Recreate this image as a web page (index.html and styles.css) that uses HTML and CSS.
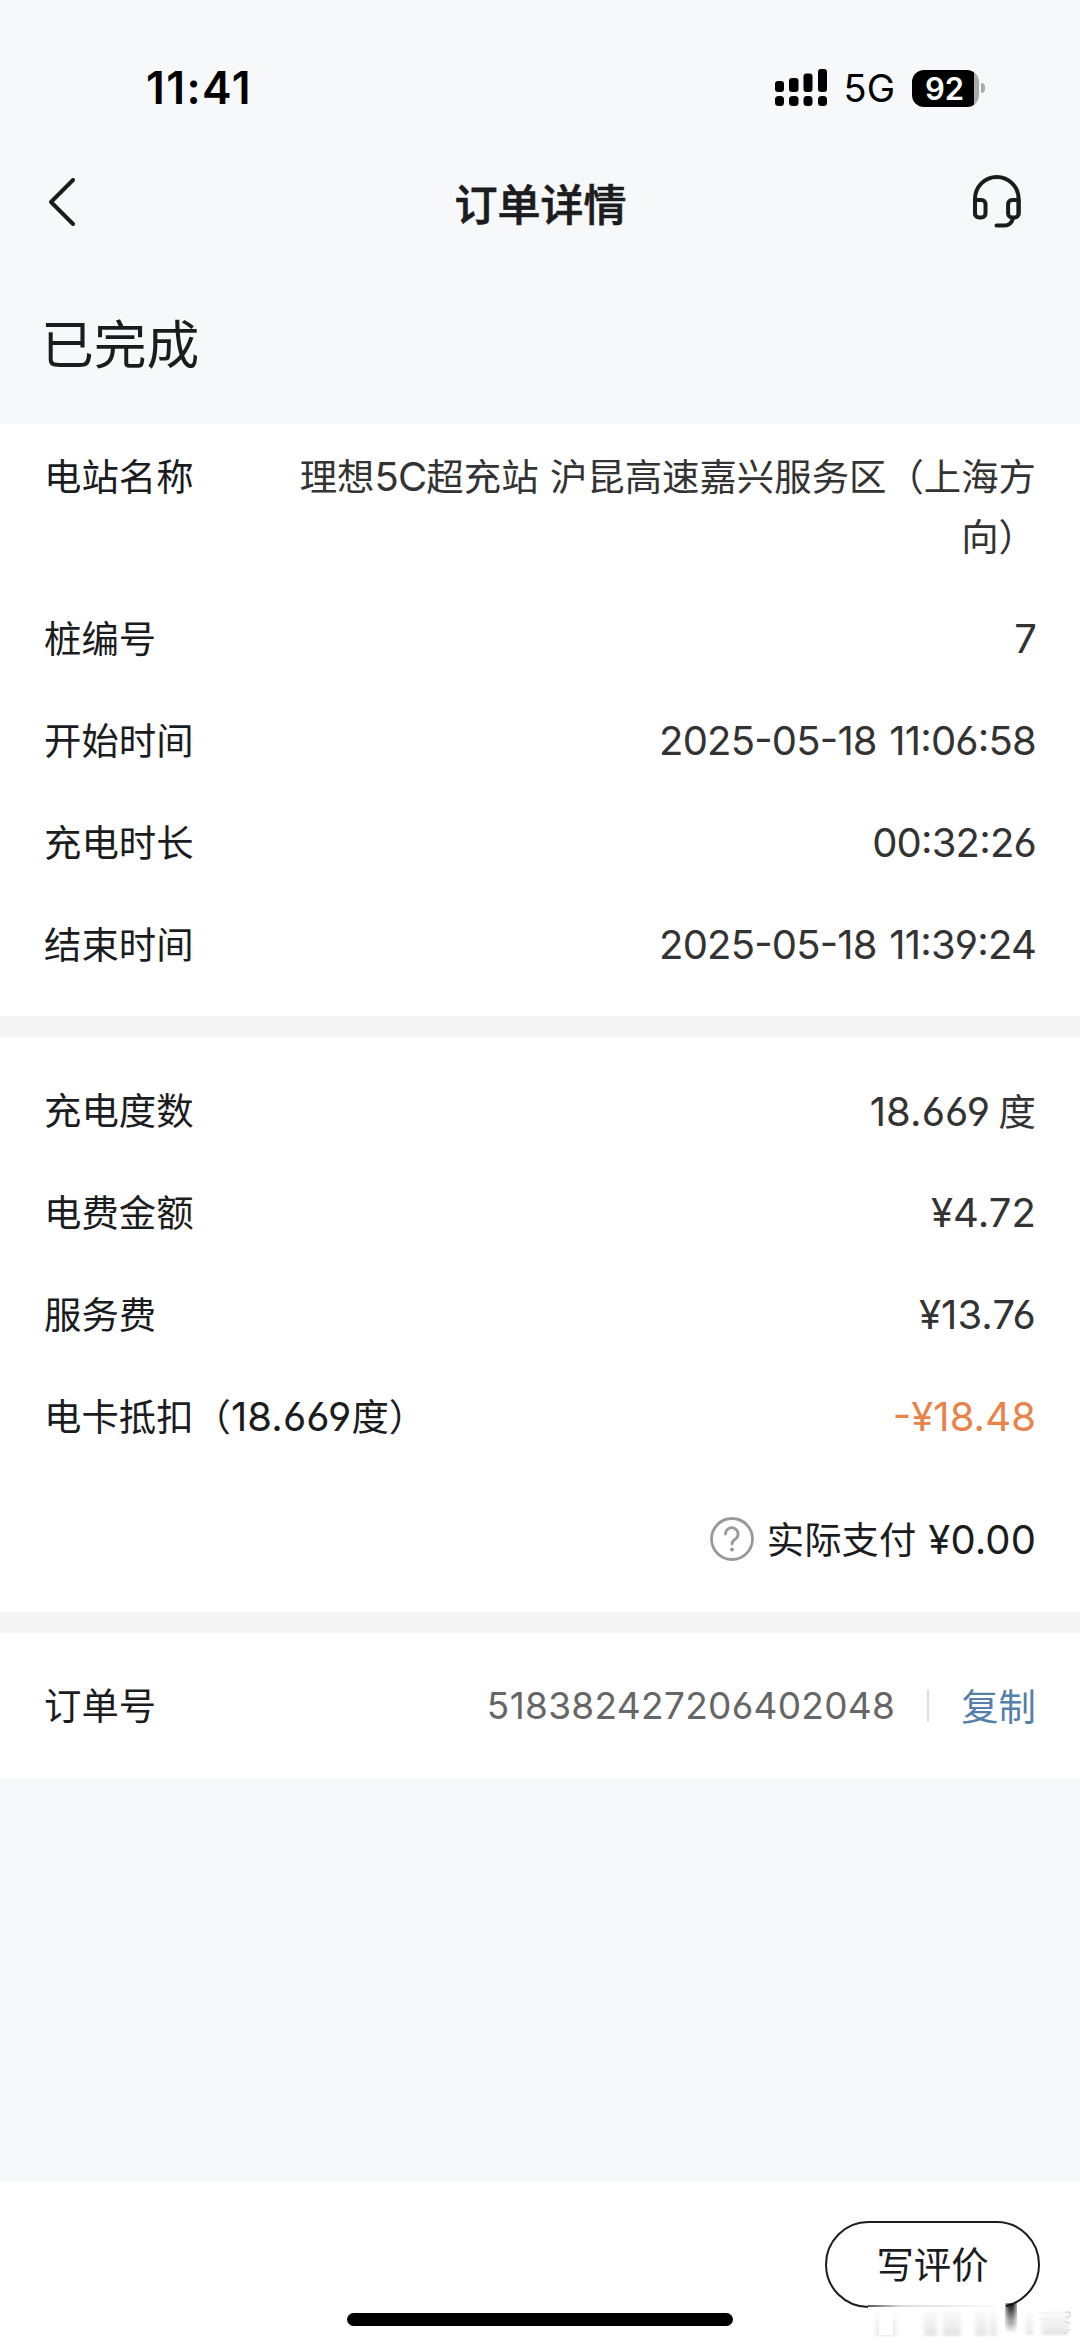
FILE: index.html
```html
<!DOCTYPE html>
<html lang="zh-CN">
<head>
  <meta charset="UTF-8" />
  <meta name="viewport" content="width=device-width, initial-scale=1.0"/>
  <title>订单详情</title>
  <link rel="stylesheet" href="styles.css">
</head>
<body>
  <div class="page">
    <div class="status-bar">
      <span class="time">11:41</span>
      <div class="status-right">
        <svg class="signal" width="52" height="38" viewBox="0 0 52 38">
          <rect x="0" y="12" width="9" height="11" rx="3"/>
          <rect x="14" y="9" width="9.500" height="14" rx="3"/>
          <rect x="28.500" y="4.500" width="9" height="18.500" rx="3"/>
          <rect x="43" y="0" width="9" height="23" rx="3"/>
          <rect x="0" y="27" width="9" height="10" rx="3.500"/>
          <rect x="14" y="27" width="9.500" height="10" rx="3.500"/>
          <rect x="28.500" y="27" width="9" height="10" rx="3.500"/>
          <rect x="43" y="27" width="9" height="10" rx="3.500"/>
        </svg>
        <span class="network">5G</span>
        <div class="battery"><span>92</span></div>
        <i class="battery-tip"></i>
      </div>
    </div>

    <header class="nav">
      <svg class="back" width="26" height="48" viewBox="0 0 26 48">
        <path d="M24 2 L2 24 L24 46"/>
      </svg>
      <h1>订单详情</h1>
      <svg class="service" width="50" height="56" viewBox="0 0 50 56">
        <path d="M3 40V25a21.800 22 0 0 1 43.600 0v15"/>
        <path d="M3 26h6.500a4 4 0 0 1 4 4v9.500a4 4 0 0 1-4 4h-2.500a4 4 0 0 1-4-4z"/>
        <path d="M46.600 26h-6.500a4 4 0 0 0-4 4v9.500a4 4 0 0 0 4 4h2.500a4 4 0 0 0 4-4z"/>
        <path d="M41 44.500c-1.500 5-4 7-8.500 7h-8"/>
      </svg>
    </header>

    <h2 class="state">已完成</h2>

    <section class="info">
      <div class="row station">
        <span class="label">电站名称</span>
        <span class="value">理想<span class="num">5C</span>超充站 沪昆高速嘉兴服务区（上海方向）</span>
      </div>
      <div class="row"><span class="label">桩编号</span><span class="value num">7</span></div>
      <div class="row"><span class="label">开始时间</span><span class="value num">2025-05-18 11:06:58</span></div>
      <div class="row"><span class="label">充电时长</span><span class="value num">00:32:26</span></div>
      <div class="row"><span class="label">结束时间</span><span class="value num">2025-05-18 11:39:24</span></div>
    </section>

    <section class="fees">
      <div class="row"><span class="label">充电度数</span><span class="value"><span class="num">18.669</span> 度</span></div>
      <div class="row"><span class="label">电费金额</span><span class="value num">¥4.72</span></div>
      <div class="row"><span class="label">服务费</span><span class="value num">¥13.76</span></div>
      <div class="row"><span class="label">电卡抵扣（<span class="num">18.669</span>度）</span><span class="value num discount">-¥18.48</span></div>
      <div class="total">
        <svg class="help" width="44" height="44" viewBox="0 0 44 44">
          <circle cx="22" cy="22" r="20.500"/>
          <path d="M15.500 17a6.300 6.300 0 1 1 9.800 5.200c-2.300 1.500-3.300 2.300-3.300 4.800"/>
          <circle class="dot" cx="22" cy="32.500" r="2"/>
        </svg>
        <span class="label">实际支付</span>
        <span class="num">¥0.00</span>
      </div>
    </section>

    <section class="order">
      <span class="label">订单号</span>
      <span class="order-no num">518382427206402048</span>
      <i class="line"></i>
      <a class="copy">复制</a>
    </section>

    <footer class="footer">
      <button class="review">写评价</button>
      <!-- faded mark over the corner of the button -->
      <svg class="mark" width="206" height="36" viewBox="0 0 206 36">
        <defs>
          <linearGradient id="drip" x1="0" y1="0" x2="0" y2="1">
            <stop offset="0" stop-color="#111"/>
            <stop offset="1" stop-color="#111" stop-opacity="0"/>
          </linearGradient>
          <linearGradient id="edge" x1="0" y1="0" x2="1" y2="0">
            <stop offset="0" stop-color="#555"/>
            <stop offset="0.250" stop-color="#ddd"/>
            <stop offset="1" stop-color="#fafafa"/>
          </linearGradient>
          <linearGradient id="fade" x1="0" y1="0" x2="0" y2="1">
            <stop offset="0" stop-color="#e4e4e4" stop-opacity="0"/>
            <stop offset="1" stop-color="#e4e4e4"/>
          </linearGradient>
          <filter id="soft"><feGaussianBlur stdDeviation="2 0.800"/></filter>
        </defs>
        <rect x="0" y="0" width="138" height="36" fill="#fff"/>
        <rect x="0" y="2" width="130" height="2" fill="url(#edge)"/>
        <g filter="url(#soft)" fill="url(#fade)">
          <rect x="8" y="4" width="20" height="29"/>
          <rect x="56" y="4" width="13" height="29"/>
          <rect x="75" y="4" width="18" height="29"/>
          <rect x="107" y="4" width="12" height="29"/>
          <rect x="122" y="4" width="7" height="29"/>
          <rect x="158" y="6" width="7" height="26"/>
          <rect x="174" y="6" width="26" height="26"/>
        </g>
        <rect x="138" y="0" width="10" height="30" fill="url(#drip)" filter="url(#soft)"/>
        <rect x="11" y="6" width="14" height="26" fill="#fff"/>
        <path d="M170 10h32M170 16h32M172 22h28" fill="none" stroke="#f0f0f0"/>
        <path d="M197 9h5v5h-5M197 18l5 3M196 31l6-5" fill="none" stroke="#ccc"/>
      </svg>
      <div class="home-bar"></div>
    </footer>
  </div>
</body>
</html>
```

FILE: styles.css
```css
* {
  box-sizing: border-box;
}
body {
  margin: 0;
  background: #f7f8fa;
  color: #1b1c1e;
  font-family: "Noto Sans CJK SC", sans-serif;
  font-size: 37.4px;
}
.page {
  width: 1080px;
  height: 2348px;
  display: flex;
  flex-direction: column;
  overflow: hidden;
}
.num {
  font-family: Inter, "Noto Sans CJK SC", sans-serif;
  font-size: 40px;
  letter-spacing: 0.1px;
  font-feature-settings: "cv03", "cv04", "case";
}

/* status bar */
.status-bar {
  height: 150px;
  padding: 26px 95px 0 146px;
  display: flex;
  align-items: center;
  justify-content: space-between;
  color: #000;
  font-family: Inter, sans-serif;
}
.time {
  font-size: 44.5px;
  font-weight: 600;
  letter-spacing: 1.4px;
}
.status-right {
  display: flex;
  align-items: center;
}
.network {
  margin: 0 17px;
  font-size: 38px;
}
.battery {
  width: 67px;
  height: 37px;
  padding-right: 2px;
  border-radius: 12px;
  background: linear-gradient(90deg, #000 62px, #aaa 62px);
  color: #fff;
  font-size: 31px;
  font-weight: 600;
  line-height: 37px;
  text-align: center;
}
.battery-tip {
  width: 4px;
  height: 10px;
  margin-left: 2px;
  border-radius: 0 5px 5px 0;
  background: #aaa;
}

/* title */
.nav {
  height: 130px;
  padding: 0 58px 26px 49px;
  display: flex;
  align-items: center;
}
.nav svg {
  fill: none;
  stroke: #1b1c1e;
  stroke-width: 4;
  stroke-linecap: round;
  stroke-linejoin: round;
}
.nav h1 {
  flex: 1;
  margin: 0;
  padding-left: 34px;
  font-size: 43px;
  font-weight: 500;
  -webkit-text-stroke: 0.7px #1b1c1e;
  text-align: center;
}
.state {
  height: 144px;
  margin: 0;
  padding: 23px 41px 0;
  font-size: 52.8px;
  font-weight: 400;
  line-height: 76px;
}

/* detail rows */
.info,
.fees,
.order {
  background: #fff;
  padding: 0 44px;
}
.row {
  height: 102px;
  display: flex;
  align-items: center;
  justify-content: space-between;
}
.label {
  margin-bottom: 3px;
}
.value {
  color: #333;
  text-align: right;
}
.info {
  height: 613px;
  border-bottom: 21px solid #f5f5f5;
}
.info .num {
  letter-spacing: -0.8px;
  word-spacing: 2px;
}
.station {
  height: 163px;
  padding-top: 22px;
  align-items: flex-start;
  line-height: 58px;
}
.station .value {
  width: 750px;
  word-spacing: 3px;
}
.fees {
  height: 596px;
  padding-top: 22px;
  border-bottom: 21px solid #f5f5f5;
}
.discount {
  color: #e8834a;
}
.total {
  height: 144px;
  display: flex;
  align-items: center;
  justify-content: flex-end;
}
.total .num {
  margin-left: 12px;
}
.help {
  margin-right: 13px;
  fill: none;
  stroke: #999;
  stroke-width: 2.8;
  stroke-linecap: round;
}
.help .dot {
  fill: #999;
  stroke: none;
}
.order {
  height: 145px;
  display: flex;
  align-items: center;
}
.order-no {
  margin-left: auto;
  color: #666;
  font-size: 37px;
  letter-spacing: 0.3px;
}
.line {
  width: 2px;
  height: 32px;
  margin: 0 32px;
  background: #ddd;
}
.copy {
  margin-bottom: 1px;
  color: #5580aa;
}

/* bottom bar */
.footer {
  position: relative;
  height: 167px;
  margin-top: auto;
  padding: 40px 40px 0;
  background: #fff;
}
.review {
  display: block;
  width: 215px;
  height: 87px;
  margin-left: auto;
  padding: 0 0 3px;
  border: 2.5px solid #1b1c1e;
  border-radius: 44px;
  background: #fff;
  color: #1b1c1e;
  font-family: inherit;
  font-size: 37.4px;
}
.mark {
  position: absolute;
  right: 6px;
  bottom: 9px;
}
.home-bar {
  position: absolute;
  left: 347px;
  top: 132px;
  width: 386px;
  height: 13px;
  border-radius: 7px;
  background: #000;
}
```
